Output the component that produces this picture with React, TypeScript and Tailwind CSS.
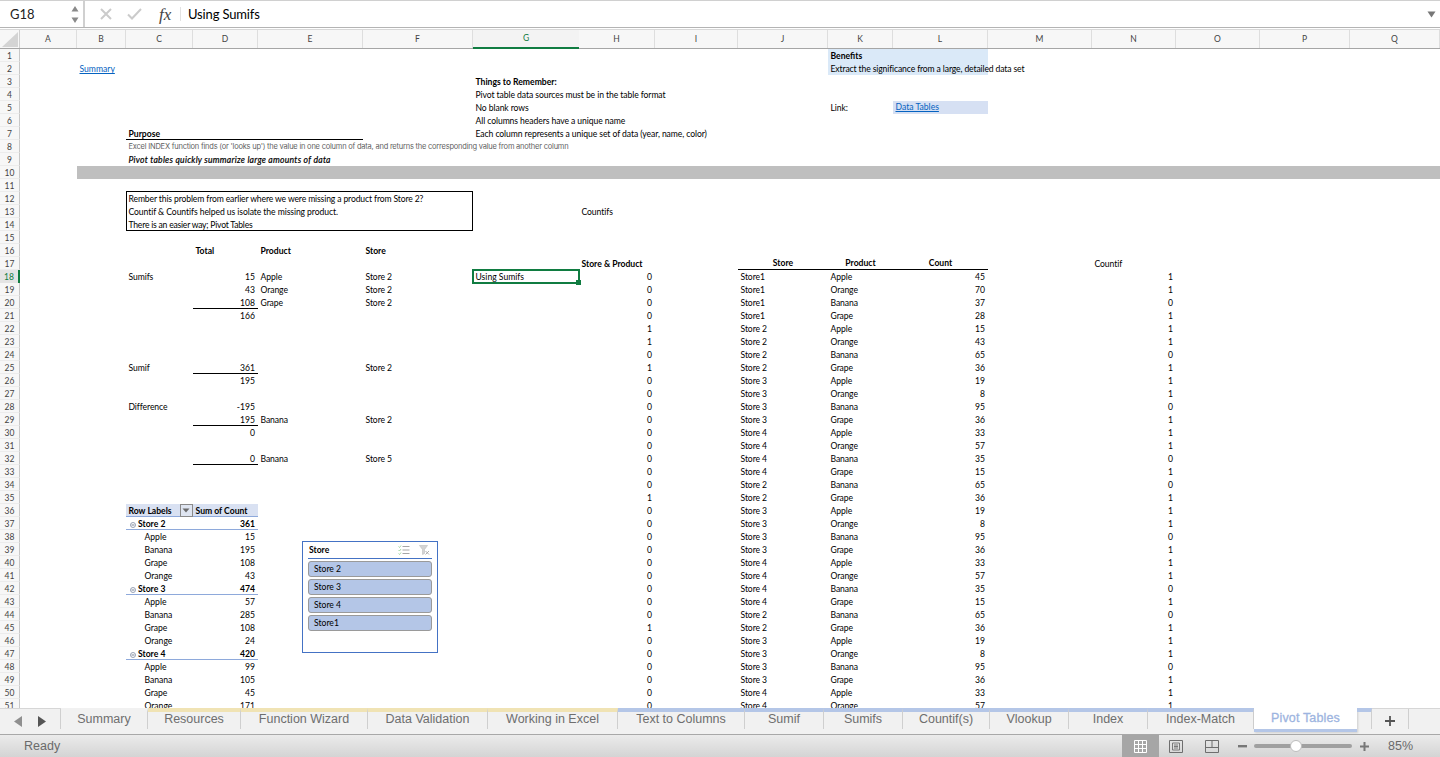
import React from "react";

const COLS = ["A","B","C","D","E","F","G","H","I","J","K","L","M","N","O","P","Q"];
const col = (l: string) => COLS.indexOf(l) + 2;
const TEMPLATE = "grid-cols-[20px_57px_49px_67px_65px_105px_110px_106px_76px_83px_90px_65px_95px_104px_84px_84px_90px_90px]";

type Cell = { c: string; r: number; t?: React.ReactNode; cls?: string; span?: number; rows?: number };
const T0 = "pl-[2.5px] whitespace-nowrap leading-[15px] text-black";
const T = T0 + " tracking-[-0.08px]";
const N = "pr-[3px] text-right whitespace-nowrap leading-[15px] text-black";
const B = "pl-[2.5px] whitespace-nowrap leading-[15px] text-black font-bold";

const H = "0,0,0,0,1,1,0,1,0,0,0,0,0,0,0,0,0,1,0,0,0,0,0,0,0,0,0,1,0,0,0,0,0,0".split(",");
const J = ["Store1","Store1","Store1","Store1","Store 2","Store 2","Store 2","Store 2","Store 3","Store 3","Store 3","Store 3","Store 4","Store 4","Store 4","Store 4","Store 2","Store 2","Store 3","Store 3","Store 3","Store 3","Store 4","Store 4","Store 4","Store 4","Store 2","Store 2","Store 3","Store 3","Store 3","Store 3","Store 4","Store 4"];
const AOBG = ["Apple","Orange","Banana","Grape"];
const K = [...AOBG,...AOBG,...AOBG,...AOBG,"Banana","Grape",...AOBG,...AOBG,"Banana","Grape",...AOBG,"Apple","Orange"];
const L = "45,70,37,28,15,43,65,36,19,8,95,36,33,57,35,15,65,36,19,8,95,36,33,57,35,15,65,36,19,8,95,36,33,57".split(",");
const NC = "1,1,0,1,1,1,0,1,1,1,0,1,1,1,0,1,0,1,1,1,0,1,1,1,0,1,0,1,1,1,0,1,1,1".split(",");

const CollapseIcon = () => (
  <svg width="6" height="6" viewBox="0 0 6 6" className="mr-[2px] shrink-0">
    <circle cx="3" cy="3" r="2.5" fill="none" stroke="#7f8ca3" strokeWidth="0.8" />
    <path d="M1.6 3h2.8" stroke="#55627a" strokeWidth="0.8" />
  </svg>
);

const FilterButton = () => (
  <span className="flex h-[13px] w-[13px] items-center justify-center border border-[#8a8a8a] bg-[#dfe5f1] mr-[0.5px] -mt-[2px]">
    <svg width="8" height="5" viewBox="0 0 8 5"><path d="M0.5 0.5h7L4 4.5z" fill="#6b6b6b" /></svg>
  </span>
);

const pivot: [number, string, string, boolean][] = [
  [37,"Store 2","361",true],[38,"Apple","15",false],[39,"Banana","195",false],[40,"Grape","108",false],[41,"Orange","43",false],
  [42,"Store 3","474",true],[43,"Apple","57",false],[44,"Banana","285",false],[45,"Grape","108",false],[46,"Orange","24",false],
  [47,"Store 4","420",true],[48,"Apple","99",false],[49,"Banana","105",false],[50,"Grape","45",false],[51,"Orange","171",false],
];

const cells: Cell[] = [
  { c:"K", r:1, span:2, rows:2, cls:"bg-[#dae9f8]" },
  { c:"L", r:5, cls:"bg-[#d6e0f3]" },
  { c:"B", r:10, span:16, cls:"bg-[#bfbfbf]" },
  { c:"C", r:12, span:4, rows:3, cls:"border border-black -mt-px" },
  { c:"C", r:7, span:3, cls:"border-b border-black" },
  { c:"J", r:17, span:3, cls:"border-b border-black" },
  { c:"D", r:20, cls:"border-b border-black" },
  { c:"D", r:25, cls:"border-b border-black" },
  { c:"D", r:29, cls:"border-b border-black" },
  { c:"D", r:32, cls:"border-b border-black" },
  { c:"C", r:36, span:2, cls:"bg-[#d9e1f2] border-b border-[#8ea9db]" },
  { c:"C", r:37, span:2, cls:"border-b border-[#8ea9db]" },
  { c:"C", r:42, span:2, cls:"border-b border-[#8ea9db]" },
  { c:"C", r:47, span:2, cls:"border-b border-[#8ea9db]" },

  { c:"K", r:1, t:"Benefits", cls:B },
  { c:"B", r:2, t:"Summary", cls:"pl-[2.5px] whitespace-nowrap leading-[15px] text-[#0563c1] underline" },
  { c:"K", r:2, t:"Extract the significance from a large, detailed data set", cls:T0 + " tracking-[-0.125px]" },
  { c:"G", r:3, t:"Things to Remember:", cls:B },
  { c:"G", r:4, t:"Pivot table data sources must be in the table format", cls:T },
  { c:"G", r:5, t:"No blank rows", cls:T },
  { c:"K", r:5, t:"Link:", cls:T },
  { c:"L", r:5, t:"Data Tables", cls:"pl-[2.5px] -mt-px whitespace-nowrap leading-[15px] text-[#0563c1] underline" },
  { c:"G", r:6, t:"All columns headers have a unique name", cls:T },
  { c:"G", r:7, t:"Each column represents a unique set of data (year, name, color)", cls:T },
  { c:"C", r:7, t:"Purpose", cls:B },
  { c:"C", r:8, t:"Excel INDEX function finds (or 'looks up') the value in one column of data, and returns the corresponding value from another column", cls:"pl-[2.5px] whitespace-nowrap leading-[14px] text-[#5f5f5f] font-['Inter',sans-serif] text-[7.5px] tracking-[-0.22px]" },
  { c:"C", r:9, t:"Pivot tables quickly summarize large amounts of data", cls:"pl-[2.5px] whitespace-nowrap leading-[15px] text-black italic tracking-[0.26px] [-webkit-text-stroke:0.2px_#000]" },
  { c:"C", r:12, t:"Rember this problem from earlier where we were missing a product from Store 2?", cls:T0 + " tracking-[-0.13px]" },
  { c:"C", r:13, t:"Countif & Countifs helped us isolate the missing product.", cls:T },
  { c:"C", r:14, t:"There is an easier way; Pivot Tables", cls:T0 + " tracking-[-0.22px]" },
  { c:"H", r:13, t:"Countifs", cls:T },
  { c:"D", r:16, t:"Total", cls:B },
  { c:"E", r:16, t:"Product", cls:B },
  { c:"F", r:16, t:"Store", cls:B },
  { c:"H", r:17, t:"Store & Product", cls:B },
  { c:"J", r:17, t:"Store", cls:"text-center font-bold leading-[15px] text-black -mt-px" },
  { c:"K", r:17, t:"Product", cls:"text-center font-bold leading-[15px] text-black -mt-px" },
  { c:"L", r:17, t:"Count", cls:"text-center font-bold leading-[15px] text-black -mt-px whitespace-nowrap" },
  { c:"N", r:17, t:"Countif", cls:T },
  { c:"C", r:18, t:"Sumifs", cls:T },
  { c:"D", r:18, t:"15", cls:N }, { c:"E", r:18, t:"Apple", cls:T }, { c:"F", r:18, t:"Store 2", cls:T },
  { c:"D", r:19, t:"43", cls:N }, { c:"E", r:19, t:"Orange", cls:T }, { c:"F", r:19, t:"Store 2", cls:T },
  { c:"D", r:20, t:"108", cls:N }, { c:"E", r:20, t:"Grape", cls:T }, { c:"F", r:20, t:"Store 2", cls:T },
  { c:"D", r:21, t:"166", cls:N },
  { c:"C", r:25, t:"Sumif", cls:T }, { c:"D", r:25, t:"361", cls:N }, { c:"F", r:25, t:"Store 2", cls:T },
  { c:"D", r:26, t:"195", cls:N },
  { c:"C", r:28, t:"Difference", cls:T }, { c:"D", r:28, t:"-195", cls:N },
  { c:"D", r:29, t:"195", cls:N }, { c:"E", r:29, t:"Banana", cls:T }, { c:"F", r:29, t:"Store 2", cls:T },
  { c:"D", r:30, t:"0", cls:N },
  { c:"D", r:32, t:"0", cls:N }, { c:"E", r:32, t:"Banana", cls:T }, { c:"F", r:32, t:"Store 5", cls:T },
  { c:"C", r:36, t:<span className="flex items-center justify-between"><span>Row Labels</span><FilterButton /></span>, cls:B },
  { c:"D", r:36, t:"Sum of Count", cls:B },
  ...pivot.flatMap(([r, label, v, head]): Cell[] => [
    head
      ? { c:"C", r, t:<span className="flex items-center pl-[1.5px]"><CollapseIcon />{label}</span>, cls:B }
      : { c:"C", r, t:label, cls:"pl-[18.5px] whitespace-nowrap leading-[15px] text-black" },
    { c:"D", r, t:v, cls: head ? N + " font-bold" : N },
  ]),
  ...H.map((v, i): Cell => ({ c:"H", r:18+i, t:v, cls:N })),
  ...J.map((v, i): Cell => ({ c:"J", r:18+i, t:v, cls:T })),
  ...K.map((v, i): Cell => ({ c:"K", r:18+i, t:v, cls:T })),
  ...L.map((v, i): Cell => ({ c:"L", r:18+i, t:v, cls:N })),
  ...NC.map((v, i): Cell => ({ c:"N", r:18+i, t:v, cls:N })),
];

const tabs = [
  { t:"Summary", w:"w-[87px]", a:"" },
  { t:"Resources", w:"w-[93px]", a:"border-t-[#f0e3b4]" },
  { t:"Function Wizard", w:"w-[127px]", a:"border-t-[#f0e3b4]" },
  { t:"Data Validation", w:"w-[120px]", a:"border-t-[#f0e3b4]" },
  { t:"Working in Excel", w:"w-[130px]", a:"border-t-[#f0e3b4]" },
  { t:"Text to Columns", w:"w-[127px]", a:"border-t-[#b4c6e7]" },
  { t:"Sumif", w:"w-[79px]", a:"border-t-[#b4c6e7]" },
  { t:"Sumifs", w:"w-[79px]", a:"border-t-[#b4c6e7]" },
  { t:"Countif(s)", w:"w-[87px]", a:"border-t-[#b4c6e7]" },
  { t:"Vlookup", w:"w-[79px]", a:"border-t-[#b4c6e7]" },
  { t:"Index", w:"w-[79px]", a:"border-t-[#b4c6e7]" },
  { t:"Index-Match", w:"w-[106px]", a:"border-t-[#b4c6e7]" },
];

function Slicer() {
  return (
    <div className="absolute left-[302px] top-[492px] h-[112px] w-[136px] border border-[#4472c4] bg-white px-[5px]">
      <div className="flex h-[17px] items-center justify-between border-b border-[#4472c4] font-bold text-black">
        <span className="pl-px pt-px">Store</span>
        <span className="flex items-center gap-[9px] pr-[2px]">
          <svg width="12" height="10" viewBox="0 0 12 10">
            <path d="M0.5 1.5l1 1 1.5-2M0.5 5l1 1 1.5-2M0.5 8.5l1 1 1.5-2" fill="none" stroke="#8fce8f" strokeWidth="0.8" />
            <path d="M4.5 1.5h7M4.5 5h7M4.5 8.5h7" stroke="#a6a6a6" strokeWidth="1" />
          </svg>
          <svg width="11" height="10" viewBox="0 0 11 10">
            <path d="M0.5 0.5h8L5.5 4.5v4L3.5 9.5V4.5z" fill="#d4d4d4" stroke="#bdbdbd" strokeWidth="0.6" />
            <path d="M6.5 6l3.5 3.5M10 6L6.5 9.5" stroke="#a6a6a6" strokeWidth="0.9" />
          </svg>
        </span>
      </div>
      <div className="mt-[2px] flex flex-col gap-[2px]">
        {["Store 2","Store 3","Store 4","Store1"].map((s) => (
          <div key={s} className="flex h-[16px] items-center rounded-[3px] border border-[#9a9a9a] bg-[#b4c6e7] pl-[5px] pt-px text-black">{s}</div>
        ))}
      </div>
    </div>
  );
}

function FormulaBar() {
  return (
    <div className="flex h-[28px] items-stretch border-t border-b border-t-[#d0d0d0] border-b-[#b4b4b4] bg-white font-['Lato',sans-serif]">
      <div className="flex w-[85px] items-center justify-between border-r-2 border-[#d0d0d0] pl-[10px] pr-[4px]">
        <span className="pt-[2px] text-[13px] text-[#222]">G18</span>
        <svg width="8" height="17" viewBox="0 0 8 17"><path d="M4 0l3.5 5.5h-7zM4 17l3.5-5.5h-7z" fill="#8a8a8a" /></svg>
      </div>
      <div className="flex w-[95px] items-center pl-[15px]">
        <svg width="12" height="12" viewBox="0 0 12 12"><path d="M1 1l10 10M11 1L1 11" stroke="#cbcbcb" strokeWidth="2" /></svg>
        <svg width="15" height="12" viewBox="0 0 15 12" className="ml-[15px]"><path d="M1 6.5l4 4L14 1" fill="none" stroke="#cbcbcb" strokeWidth="2" /></svg>
        <span className="ml-[17px] pt-px font-['Liberation_Serif',serif] text-[17px] italic text-[#444]">fx</span>
      </div>
      <div className="my-[6px] w-px bg-[#e2e2e2]" />
      <div className="flex flex-1 items-center justify-between pl-[7px] pr-[3px]">
        <span className="pt-px text-[13px] tracking-[-0.15px] text-black">Using Sumifs</span>
        <svg width="10" height="7" viewBox="0 0 10 7"><path d="M0.5 0.5h8L4.5 6.5z" fill="#777" /></svg>
      </div>
    </div>
  );
}

function ColumnHeader() {
  return (
    <div className={`mt-[1px] grid h-[20px] ${TEMPLATE} border-t border-b border-t-[#d8d8d8] border-b-[#a6a6a6] bg-[#f7f7f7] font-['Lato',sans-serif] text-[8.5px] text-[#444]`}>
      <div className="relative border-r border-[#d0d0d0]">
        <svg width="16" height="15" viewBox="0 0 16 15" className="absolute bottom-[1px] right-[1px]"><path d="M16 0v15H0z" fill="#d4d4d4" /></svg>
      </div>
      {COLS.map((c) => (
        <div key={c} className={c === "G"
          ? "flex items-center justify-center border-b-2 border-[#107c41] -mb-px bg-[#f3f3f3] text-[#107c41]"
          : "flex items-center justify-center border-r border-[#dedede]"}>{c}</div>
      ))}
    </div>
  );
}

function Sheet() {
  return (
    <div className={`relative grid min-h-0 flex-1 overflow-hidden ${TEMPLATE} grid-rows-[repeat(51,13px)] bg-white font-['Lato',sans-serif] text-[8.6px]`}>
      {Array.from({ length: 51 }, (_, i) => i + 1).map((r) => (
        <div key={r} style={{ gridColumn: 1, gridRow: r }}
          className={r === 18
            ? "flex items-center justify-center border-r-2 border-[#107c41] bg-[#e4e4e4] pt-[2px] text-[8.5px] leading-none text-[#107c41]"
            : "flex items-center justify-center border-r border-b border-r-[#c8c8c8] border-b-[#ececec] bg-[#f7f7f7] pt-[2px] text-[8.5px] leading-none text-[#444]"}>
          {r}
        </div>
      ))}
      {cells.map((x, i) => (
        <div key={i} className={x.cls}
          style={{ gridColumn: `${col(x.c)} / span ${x.span ?? 1}`, gridRow: `${x.r} / span ${x.rows ?? 1}` }}>
          {x.t}
        </div>
      ))}
      <div style={{ gridColumn: col("G"), gridRow: 18 }}
        className="relative -mx-px -mt-px -mb-px whitespace-nowrap border-2 border-[#107c41] pl-[1.5px] leading-[13px] text-black">
        Using Sumifs
        <span className="absolute -bottom-[3px] -right-[3px] h-[5px] w-[5px] bg-[#107c41]" />
      </div>
      <Slicer />
    </div>
  );
}

function TabBar() {
  return (
    <div className="flex h-[26px] border-t border-[#d6d6d6] bg-[#f1f1f1] font-['Liberation_Sans',sans-serif] text-[12.5px] text-[#6e6e6e]">
      <div className="mb-[5px] flex w-[61px] items-center gap-[14px] border-r border-[#cfcfcf] pl-[14px] pt-[5px]">
        <svg width="9" height="11" viewBox="0 0 9 11"><path d="M8 0v11L0 5.5z" fill="#8f8f8f" /></svg>
        <svg width="9" height="11" viewBox="0 0 9 11"><path d="M1 0v11l8-5.5z" fill="#555" /></svg>
      </div>
      {tabs.map((t) => (
        <div key={t.t} className={`${t.w} -mt-px mb-[5px] flex items-center justify-center border-r border-t-[4px] border-r-[#cfcfcf] ${t.a || "border-t-[#f1f1f1]"}`}>
          <span className="-mt-[3px]">{t.t}</span>
        </div>
      ))}
      <div className="-mt-px mb-[2px] flex w-[103px] items-center justify-center border-b-[3px] border-[#b4c6e7] bg-white text-[#9db4e0] shadow-[1px_1px_2px_rgba(0,0,0,0.15)]">
        <span className="tracking-[0.15px] [-webkit-text-stroke:0.3px_#9db4e0]">Pivot Tables</span>
      </div>
      <div className="-mt-px mb-[5px] w-[15px] border-t-[4px] border-r border-r-[#cfcfcf] border-t-[#b4c6e7]" />
      <div className="mb-[5px] flex w-[37px] items-center justify-center border-r border-[#cfcfcf] pt-[3px]">
        <svg width="12" height="12" viewBox="0 0 12 12"><path d="M6 1v10M1 6h10" stroke="#555" strokeWidth="1.8" /></svg>
      </div>
    </div>
  );
}

function StatusBar() {
  return (
    <div className="flex h-[23px] items-center border-t border-[#a8a8a8] bg-gradient-to-b from-[#ebebeb] to-[#d4d4d4] font-['Liberation_Sans',sans-serif] text-[12.5px] text-[#6a6a6a]">
      <span className="pl-[24px]">Ready</span>
      <div className="ml-auto flex h-full items-center">
        <div className="flex h-full w-[37px] items-center justify-center bg-[#a6a6a6]">
          <svg width="13" height="13" viewBox="0 0 13 13"><path d="M.5.5h12v12H.5zM4.5.5v12M8.5.5v12M.5 4.5h12M.5 8.5h12" fill="none" stroke="#fff" strokeWidth="1" /></svg>
        </div>
        <svg width="14" height="13" viewBox="0 0 14 13" className="ml-[10px]"><path d="M.5.5h13v12H.5z" fill="none" stroke="#6e6e6e" /><path d="M3.5 3h7v7h-7zM5 5h4M5 6.5h4M5 8h4" fill="none" stroke="#6e6e6e" strokeWidth="0.9" /></svg>
        <svg width="14" height="13" viewBox="0 0 14 13" className="ml-[22px]"><path d="M.5.5h13v12H.5zM.5 7.5h13M7 .5v7" fill="none" stroke="#6e6e6e" /></svg>
        <svg width="9" height="3" viewBox="0 0 9 3" className="ml-[19px]"><rect width="9" height="2.4" fill="#777" /></svg>
        <div className="relative ml-[7px] h-[4px] w-[98px] rounded-full bg-[#a0a0a0]">
          <span className="absolute -top-[4px] left-[36px] h-[12px] w-[12px] rounded-full border border-[#bdbdbd] bg-white" />
        </div>
        <svg width="9" height="9" viewBox="0 0 9 9" className="ml-[8px]"><path d="M4.5 0v9M0 4.5h9" stroke="#777" strokeWidth="2" /></svg>
        <span className="ml-[19px] w-[52px] tracking-[0.1px]">85%</span>
      </div>
    </div>
  );
}

export default function App() {
  return (
    <div className="flex h-[757px] w-[1440px] flex-col overflow-hidden bg-white">
      <FormulaBar />
      <ColumnHeader />
      <Sheet />
      <TabBar />
      <StatusBar />
    </div>
  );
}
